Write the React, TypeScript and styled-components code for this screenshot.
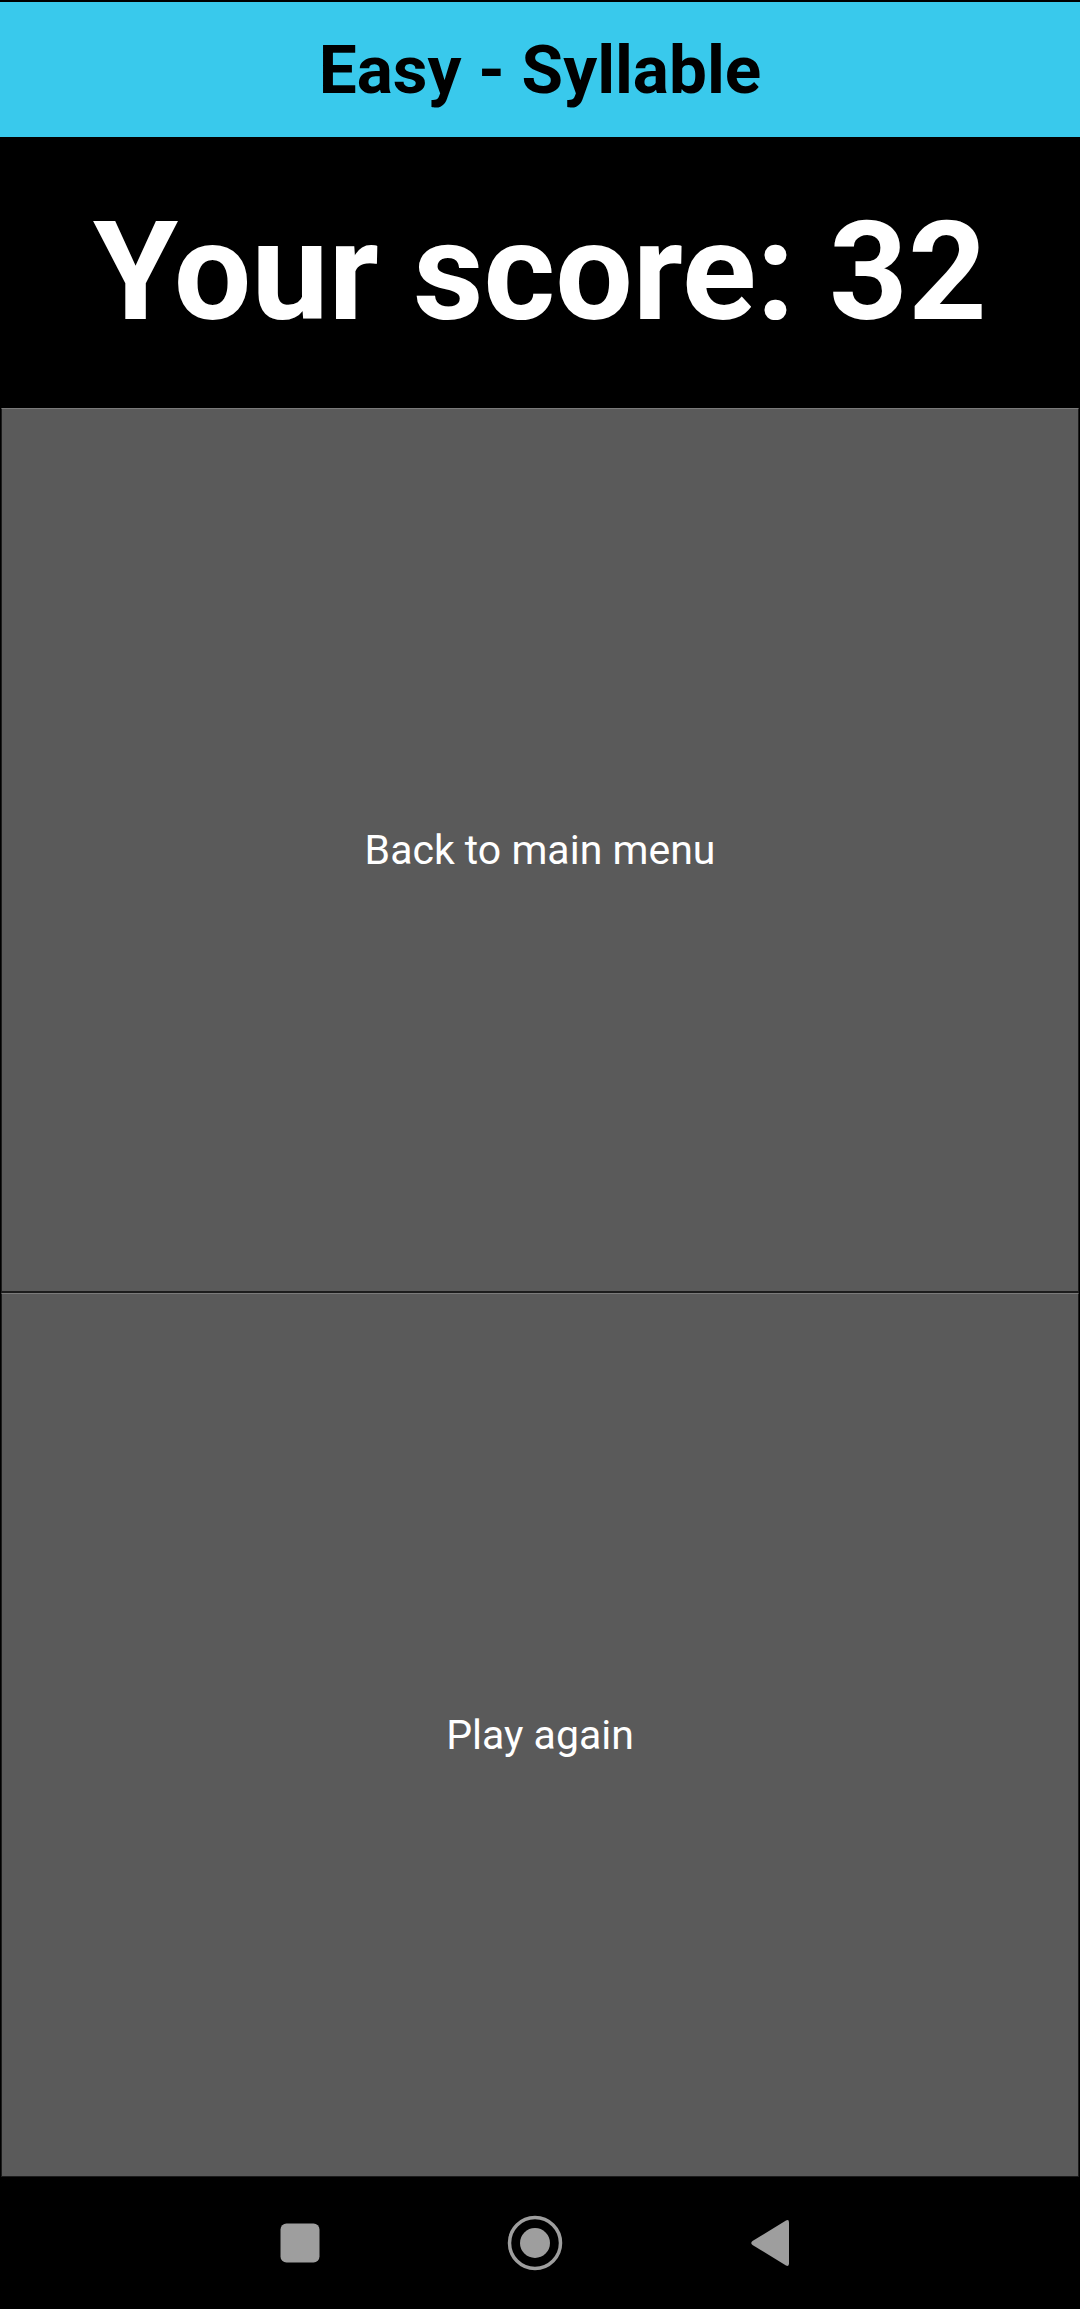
import React from "react";
import styled, { createGlobalStyle } from "styled-components";

const Global = createGlobalStyle`
  html, body { margin: 0; padding: 0; background: #000; }
  * { box-sizing: border-box; }
  body { font-family: Roboto, "Noto Sans", sans-serif; }
`;

const Screen = styled.div`
  width: 1080px;
  height: 2309px;
  display: flex;
  flex-direction: column;
  background: #000;
  padding-top: 2px;
`;

const Header = styled.header`
  height: 135px;
  flex: none;
  background: #39c9ec;
  display: flex;
  align-items: center;
  justify-content: center;
`;

const Title = styled.h1`
  margin: 0;
  font-family: Roboto, sans-serif;
  font-weight: 700;
  font-size: 67.5px;
  color: #000;
  line-height: 1;
`;

const ScoreArea = styled.section`
  height: 271px;
  flex: none;
  display: flex;
  align-items: center;
  justify-content: center;
`;

const Score = styled.div`
  font-family: Roboto, sans-serif;
  font-weight: 700;
  font-size: 137.5px;
  color: #fff;
  line-height: 1;
`;

const Buttons = styled.div`
  flex: 1;
  display: flex;
  flex-direction: column;
  padding: 0 1px;
`;

const ActionButton = styled.button`
  flex: 1;
  margin: 0;
  border: 1px solid #1c1c1c;
  border-top: 1px solid #7a7a7a;
  background: #5a5a5a;
  color: #fff;
  font-family: Roboto, sans-serif;
  font-weight: 400;
  font-size: 41px;
  display: flex;
  align-items: center;
  justify-content: center;
  padding: 0;
  & + & {
    box-shadow: 0 -2px 0 #1c1c1c;
  }
`;

const NavBar = styled.nav`
  height: 132px;
  flex: none;
  background: #000;
  display: flex;
  align-items: center;
  justify-content: center;
  padding-right: 10px;
`;

const NavSlot = styled.div`
  width: 235px;
  display: flex;
  align-items: center;
  justify-content: center;
`;

export default function App() {
  return (
    <>
      <Global />
      <Screen>
        <Header>
          <Title>Easy - Syllable</Title>
        </Header>
        <ScoreArea>
          <Score>Your score: 32</Score>
        </ScoreArea>
        <Buttons>
          <ActionButton>Back to main menu</ActionButton>
          <ActionButton>Play again</ActionButton>
        </Buttons>
        <NavBar>
          <NavSlot>
            <svg width="40" height="40" viewBox="0 0 40 40">
              <rect x="0.5" y="0.5" width="39" height="39" rx="6" fill="#9e9e9e" />
            </svg>
          </NavSlot>
          <NavSlot>
            <svg width="58" height="58" viewBox="0 0 58 58">
              <circle cx="29" cy="29" r="25.5" fill="none" stroke="#9e9e9e" strokeWidth="3.5" />
              <circle cx="29" cy="29" r="15" fill="#9e9e9e" />
            </svg>
          </NavSlot>
          <NavSlot>
            <svg width="40" height="48" viewBox="0 0 40 48">
              <path d="M36 1.5 Q39 0 39 3.5 L39 44.5 Q39 48 36 46.5 L2.5 26 Q0 24 2.5 22 Z" fill="#9e9e9e" />
            </svg>
          </NavSlot>
        </NavBar>
      </Screen>
    </>
  );
}
